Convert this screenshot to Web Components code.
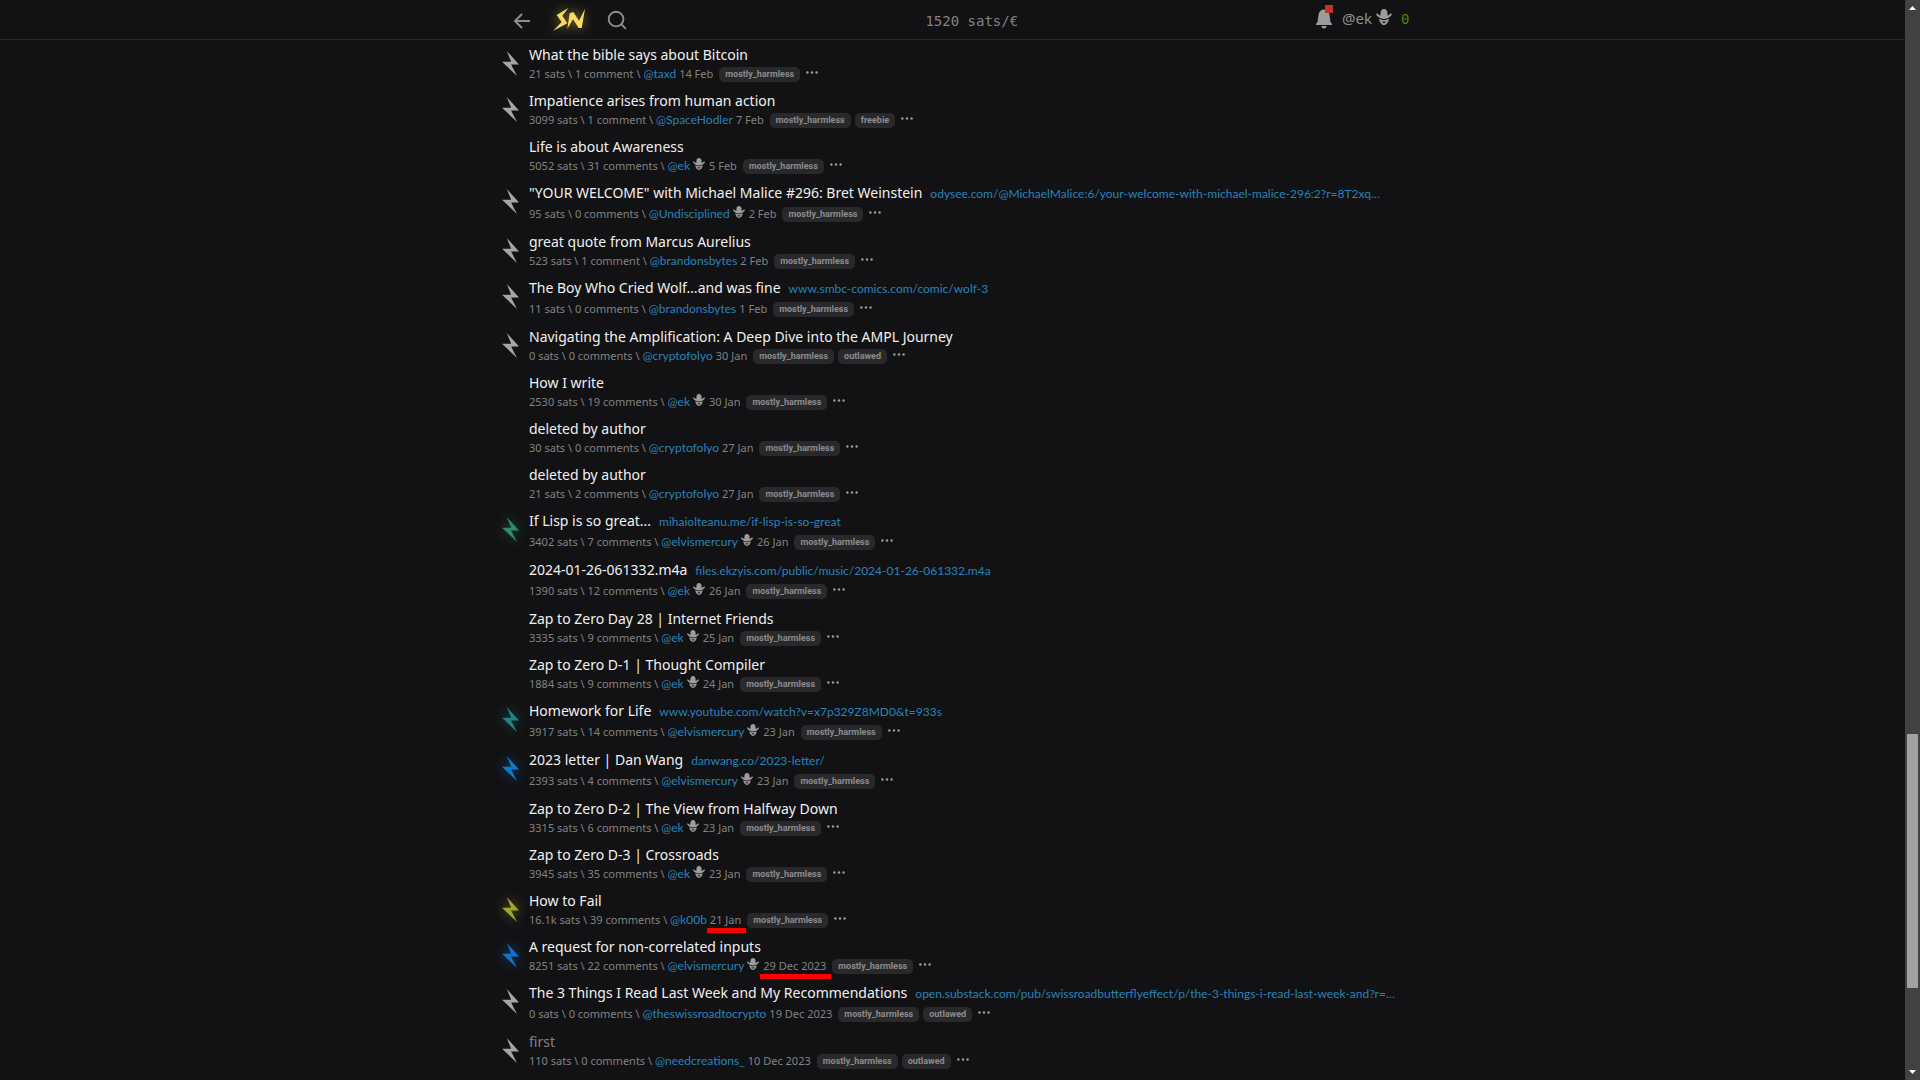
<!DOCTYPE html>
<html lang="en">
<head>
<meta charset="utf-8">
<title>stacker news</title>
<style>
  html, body { height: 100%; }
  body { margin: 0; background: #121214; overflow: hidden; font-family: "Noto Sans", "Liberation Sans", sans-serif; color: #828282; }
</style>
</head>
<body>
<sn-app>
  <sn-header slot="header" rate="1520 sats/€" user="@ek" balance="0"></sn-header>
  <sn-item heading="What the bible says about Bitcoin" sats="21 sats" comments="1 comment" user="@taxd" date="14 Feb" bolt="#a5a5a5" tags="mostly_harmless"></sn-item>
  <sn-item heading="Impatience arises from human action" sats="3099 sats" comments="1 comment" user="@SpaceHodler" date="7 Feb" bolt="#a5a5a5" tags="mostly_harmless,freebie"></sn-item>
  <sn-item heading="Life is about Awareness" sats="5052 sats" comments="31 comments" user="@ek" hat date="5 Feb" tags="mostly_harmless"></sn-item>
  <sn-item heading='"YOUR WELCOME" with Michael Malice #296: Bret Weinstein' url="odysee.com/@MichaelMalice:6/your-welcome-with-michael-malice-296:2?r=8T2xq…" sats="95 sats" comments="0 comments" user="@Undisciplined" hat date="2 Feb" bolt="#a5a5a5" tags="mostly_harmless"></sn-item>
  <sn-item heading="great quote from Marcus Aurelius" sats="523 sats" comments="1 comment" user="@brandonsbytes" date="2 Feb" bolt="#a5a5a5" tags="mostly_harmless"></sn-item>
  <sn-item heading="The Boy Who Cried Wolf…and was fine" url="www.smbc-comics.com/comic/wolf-3" sats="11 sats" comments="0 comments" user="@brandonsbytes" date="1 Feb" bolt="#a5a5a5" tags="mostly_harmless"></sn-item>
  <sn-item heading="Navigating the Amplification: A Deep Dive into the AMPL Journey" sats="0 sats" comments="0 comments" user="@cryptofolyo" date="30 Jan" bolt="#a5a5a5" tags="mostly_harmless,outlawed"></sn-item>
  <sn-item heading="How I write" sats="2530 sats" comments="19 comments" user="@ek" hat date="30 Jan" tags="mostly_harmless"></sn-item>
  <sn-item heading="deleted by author" sats="30 sats" comments="0 comments" user="@cryptofolyo" date="27 Jan" tags="mostly_harmless"></sn-item>
  <sn-item heading="deleted by author" sats="21 sats" comments="2 comments" user="@cryptofolyo" date="27 Jan" tags="mostly_harmless"></sn-item>
  <sn-item heading="If Lisp is so great..." url="mihaiolteanu.me/if-lisp-is-so-great" sats="3402 sats" comments="7 comments" user="@elvismercury" hat date="26 Jan" bolt="#2f8a66" glow tags="mostly_harmless"></sn-item>
  <sn-item heading="2024-01-26-061332.m4a" url="files.ekzyis.com/public/music/2024-01-26-061332.m4a" sats="1390 sats" comments="12 comments" user="@ek" hat date="26 Jan" tags="mostly_harmless"></sn-item>
  <sn-item heading="Zap to Zero Day 28 | Internet Friends" sats="3335 sats" comments="9 comments" user="@ek" hat date="25 Jan" tags="mostly_harmless"></sn-item>
  <sn-item heading="Zap to Zero D-1 | Thought Compiler" sats="1884 sats" comments="9 comments" user="@ek" hat date="24 Jan" tags="mostly_harmless"></sn-item>
  <sn-item heading="Homework for Life" url="www.youtube.com/watch?v=x7p329Z8MD0&amp;t=933s" sats="3917 sats" comments="14 comments" user="@elvismercury" hat date="23 Jan" bolt="#238282" glow tags="mostly_harmless"></sn-item>
  <sn-item heading="2023 letter | Dan Wang" url="danwang.co/2023-letter/" sats="2393 sats" comments="4 comments" user="@elvismercury" hat date="23 Jan" bolt="#0f7bc9" glow tags="mostly_harmless"></sn-item>
  <sn-item heading="Zap to Zero D-2 | The View from Halfway Down" sats="3315 sats" comments="6 comments" user="@ek" hat date="23 Jan" tags="mostly_harmless"></sn-item>
  <sn-item heading="Zap to Zero D-3 | Crossroads" sats="3945 sats" comments="35 comments" user="@ek" hat date="23 Jan" tags="mostly_harmless"></sn-item>
  <sn-item heading="How to Fail" sats="16.1k sats" comments="39 comments" user="@k00b" date="21 Jan" marked bolt="#a2a628" glow tags="mostly_harmless"></sn-item>
  <sn-item heading="A request for non-correlated inputs" sats="8251 sats" comments="22 comments" user="@elvismercury" hat date="29 Dec 2023" marked bolt="#1173cc" glow tags="mostly_harmless"></sn-item>
  <sn-item heading="The 3 Things I Read Last Week and My Recommendations" url="open.substack.com/pub/swissroadbutterflyeffect/p/the-3-things-i-read-last-week-and?r=…" sats="0 sats" comments="0 comments" user="@theswissroadtocrypto" date="19 Dec 2023" bolt="#a5a5a5" tags="mostly_harmless,outlawed"></sn-item>
  <sn-item heading="first" visited sats="110 sats" comments="0 comments" user="@needcreations_" date="10 Dec 2023" bolt="#a5a5a5" tags="mostly_harmless,outlawed"></sn-item>
  <sn-scrollbar slot="scrollbar"></sn-scrollbar>
</sn-app>

<script>
const esc = s => (s || '').replace(/&/g, '&amp;').replace(/</g, '&lt;');

/* cowboy streak icon */
const hat = size => `<svg class="hat" width="${size}" height="${size}" viewBox="0 0 24 24" fill="#9c9c9c" aria-hidden="true"><path d="M7 5C7 2 9 0 12 0s5 2 5 5l.5 5C19.500 9 21 8 22.500 6.500L24 8C22 12 18 15 12 15S2 12 0 8l1.500-1.500C3 8 4.500 9 6.500 10z"/><path fill-rule="evenodd" d="M4.500 14.500C9 17 15 17 19.500 14.500 19 19 16 24 12 24S5 19 4.500 14.500zM8.500 18.500C9.500 20.500 10.800 21.200 12 21.200S14.500 20.500 15.500 18.500C14.200 19.200 13 19 12 18.600 11 19 9.800 19.200 8.500 18.500z"/></svg>`;

class SnApp extends HTMLElement {
  constructor() {
    super();
    this.attachShadow({ mode: 'open' }).innerHTML = `
      <style>
        :host { display: flex; height: 100vh; }
        .page { flex: 1; min-width: 0; overflow: hidden; }
        main { max-width: 901px; margin: 0 auto; padding-top: 5px; }
      </style>
      <div class="page">
        <slot name="header"></slot>
        <main><slot></slot></main>
      </div>
      <slot name="scrollbar"></slot>`;
  }
}

class SnHeader extends HTMLElement {
  connectedCallback() {
    const at = n => esc(this.getAttribute(n));
    this.attachShadow({ mode: 'open' }).innerHTML = `
      <style>
        :host { display: block; border-bottom: 1px solid #29292b; }
        nav { display: flex; justify-content: space-between; align-items: center; max-width: 898px; height: 39px; margin: 0 auto; padding-left: 16px; }
        div { display: flex; align-items: center; }
        svg { display: block; }
        button { display: block; padding: 0; border: 0; background: none; color: #8e8e8e; }
        a { color: #8e8e8e; text-decoration: none; }
        .left { gap: 21px; }
        .logo { filter: drop-shadow(0 0 6px rgba(250, 218, 94, .55)); }
        .rate { padding-top: 2px; font: 14px/18px "DejaVu Sans Mono", "Liberation Mono", monospace; }
        .bell { position: relative; margin-right: 10px; }
        .dot { position: absolute; top: -4px; right: -1px; width: 8px; height: 8px; background: #c03221; }
        .user { font-size: 15px; line-height: 18px; padding: 0 4px 2px 0; }
        .hat { margin-bottom: 4px; }
        .sats { padding-left: 9px; font: 14px/18px "DejaVu Sans Mono", "Liberation Mono", monospace; color: #5c8001; }
        .right { padding-bottom: 2px; }
      </style>
      <nav>
        <div class="left">
          <button aria-label="Back"><svg width="20" height="20" viewBox="0 0 20 20" fill="none" stroke="currentColor" stroke-width="2"><path d="M18 11H3M10 4L3 11l7 7"/></svg></button>
          <a class="logo" href="#" aria-label="Home"><svg width="32" height="24" viewBox="0 0 96 72" fill="#fada5e"><path d="M46 0L11 21 26 42 0 69 43 46 28 23zM43 62L50 16 61 12 78 38 96 2 86 60H77L60 34z"/></svg></a>
          <button aria-label="Search"><svg width="22" height="22" viewBox="0 0 24 24" fill="currentColor"><path d="M18.031 16.617l4.283 4.282-1.415 1.415-4.282-4.283A8.960 8.960 0 0 1 11 20c-4.968 0-9-4.032-9-9s4.032-9 9-9 9 4.032 9 9a8.960 8.960 0 0 1-1.969 5.617zm-2.006-.742A6.977 6.977 0 0 0 18 11c0-3.868-3.133-7-7-7-3.868 0-7 3.132-7 7 0 3.867 3.132 7 7 7a6.977 6.977 0 0 0 4.875-1.975l.15-.15z"/></svg></button>
        </div>
        <div class="rate">${at('rate')}</div>
        <div class="right">
          <a class="bell" href="#" aria-label="Notifications"><svg width="16" height="20" viewBox="0 0 16 20" fill="#9c9c9c"><path d="M0 16v-1l1.500-2L2.500 6C3 2.500 5 .6 8 .6s5 1.900 5.500 5.400l1 7L16 15v1zM5.500 17h5a2.500 2.500 0 0 1-5 0z"/></svg><span class="dot"></span></a>
          <a class="user" href="#">${at('user')}</a>${hat(16)}
          <a class="sats" href="#">${at('balance')}</a>
        </div>
      </nav>`;
  }
}

class SnItem extends HTMLElement {
  connectedCallback() {
    const at = n => esc(this.getAttribute(n)), has = n => this.hasAttribute(n);
    const tags = at('tags').split(',').map(t => `<span class="tag">${t}</span>`).join('');
    this.attachShadow({ mode: 'open' }).innerHTML = `
      <style>
        :host { display: flex; padding-bottom: 8px; }
        :host([url]) { padding-bottom: 9px; }
        .vote { flex: none; width: 27px; padding-top: 6px; }
        .vote button { display: block; padding: 0; border: 0; background: none; color: ${at('bolt')}; }
        :host([glow]) .vote button { filter: drop-shadow(0 0 6px color-mix(in srgb, ${at('bolt')} 60%, transparent)); }
        svg { display: block; }
        .body { flex: 1; min-width: 0; white-space: nowrap; }
        .title { display: flex; align-items: baseline; gap: 8px; font-size: 14px; line-height: 20px; }
        :host([url]) .title { padding-bottom: 2px; }
        a { color: inherit; text-decoration: none; }
        .title .head { color: #f0f0f0; }
        :host([visited]) .title .head { color: #828282; }
        .title .url, .meta .user { font: 12px/16px Lato, "Noto Sans", sans-serif; color: #2783b9; }
        .meta { display: flex; align-items: center; height: 18px; font-size: 11px; line-height: 18px; white-space: pre; }
        .user { padding-right: 3px; }
        .hat { flex: none; margin: 0 4px 4px 0; }
        .date { position: relative; padding-right: 2px; }
        :host([marked]) .date::after { content: ""; position: absolute; left: -3px; right: -3px; top: 17px; height: 5px; background: #f00; }
        .tag { margin-left: 4px; padding: 0 6px; border-radius: 5px; background: #29292b; color: #8b8b8d; font: bold 9px/15px Roboto, "Liberation Sans", sans-serif; }
        .more { margin-left: 6px; padding: 0 0 3px; border: 0; background: none; color: #9c9c9c; }
      </style>
      <div class="vote">${has('bolt') ? `<button aria-label="Zap"><svg width="17" height="25" viewBox="0 0 200 307" preserveAspectRatio="none" fill="currentColor"><path d="M56 0L107.606 131H0L177 307L106.979 165H200L56 0Z"/></svg></button>` : ''}</div>
      <div class="body">
        <div class="title"><a class="head" href="#">${at('heading')}</a>${has('url') ? `<a class="url" href="#">${at('url')}</a>` : ''}</div>
        <div class="meta"><span>${at('sats')} \\ </span><a href="#">${at('comments')}</a><span> \\ </span><a class="user" href="#">${at('user')}</a>${has('hat') ? hat(12) : ''}<a class="date" href="#">${at('date')}</a>${tags}<button class="more" aria-label="More"><svg width="12" height="3" viewBox="0 0 12 3" fill="currentColor"><circle cx="1.400" cy="1.500" r="1.200"/><circle cx="6" cy="1.500" r="1.200"/><circle cx="10.600" cy="1.500" r="1.200"/></svg></button></div>
      </div>`;
  }
}

class SnScrollbar extends HTMLElement {
  constructor() {
    super();
    this.attachShadow({ mode: 'open' }).innerHTML = `
      <style>
        :host { display: flex; flex-direction: column; align-items: center; flex: none; width: 15px; height: 100%; background: #424242; }
        svg { display: block; flex: none; margin: 6px 0; }
        .before { flex: 718; }
        .thumb { flex: 254; width: 11px; background: #a1a1a1; }
        .after { flex: 76; }
      </style>
      <svg width="7" height="4" viewBox="0 0 7 4" fill="#fff"><path d="M3.500 0L7 4H0z"/></svg>
      <div class="before"></div><div class="thumb"></div><div class="after"></div>
      <svg width="7" height="4" viewBox="0 0 7 4" fill="#fff"><path d="M3.500 4L7 0H0z"/></svg>`;
  }
}

customElements.define('sn-header', SnHeader);
customElements.define('sn-item', SnItem);
customElements.define('sn-scrollbar', SnScrollbar);
customElements.define('sn-app', SnApp);
</script>
</body>
</html>
